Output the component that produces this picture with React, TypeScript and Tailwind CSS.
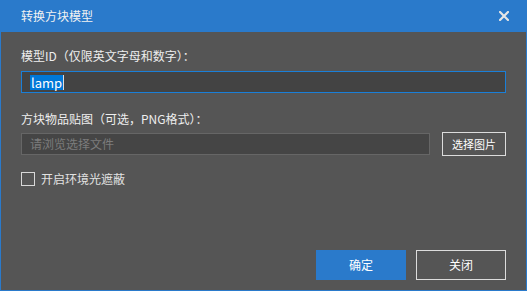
import React from "react";

const font = { fontFamily: '"Microsoft YaHei", "Noto Sans CJK SC", sans-serif' };

const App: React.FC = () => {
  return (
    <div
      className="w-[527px] h-[291px] flex flex-col bg-[#555555] border border-t-0 border-[#2a7acb] text-[12px]"
      style={font}
    >
      {/* Title bar */}
      <div className="h-[32px] shrink-0 flex items-center justify-between bg-[#2a7acb] pl-[20px] pr-[17px] text-[#f2f2f2]">
        <span className="text-[12px] leading-none">转换方块模型</span>
        <svg width="10" height="10" viewBox="0 0 10 10" className="text-[#e6e6e6]">
          <path d="M1 1 L9 9 M9 1 L1 9" stroke="currentColor" strokeWidth="2.2" strokeLinecap="square" />
        </svg>
      </div>

      {/* Body */}
      <div className="flex-1 flex flex-col px-[20px] pb-[10px] text-[#eeeeee]">
        <div className="mt-[15px] h-[17px] leading-[17px]">模型ID（仅限英文字母和数字）：</div>
        <div className="mt-[7px] h-[22px] flex items-center border border-[#1a7fd8] bg-[#434343] pl-[8px]">
          <span className="bg-[#0078d7] text-white text-[13px] leading-[15px] px-[1px]">lamp</span>
          <span className="w-px h-[15px] bg-[#dddddd]" />
        </div>

        <div className="mt-[17px] h-[17px] leading-[17px]">方块物品贴图（可选，PNG格式）：</div>
        <div className="mt-[5px] h-[24px] flex items-center">
          <div className="flex-1 h-[22px] flex items-center border border-[#666666] bg-[#454545] pl-[8px] text-[#7c7c7c]">
            请浏览选择文件
          </div>
          <button className="ml-[12px] w-[64px] h-[24px] border border-[#dcdcdc] text-[11px] text-white">
            选择图片
          </button>
        </div>

        <div className="mt-[16px] flex items-center">
          <span className="w-[14px] h-[14px] border border-[#d8d8d8]" />
          <span className="ml-[6px] text-[#e2e2e2] leading-[14px]">开启环境光遮蔽</span>
        </div>

        <div className="mt-auto flex justify-end gap-[10px]">
          <button className="w-[90px] h-[30px] bg-[#2a7acb] text-white text-[12px]">确定</button>
          <button className="w-[90px] h-[30px] border border-[#dcdcdc] text-white text-[12px]">关闭</button>
        </div>
      </div>
    </div>
  );
};

export default App;
